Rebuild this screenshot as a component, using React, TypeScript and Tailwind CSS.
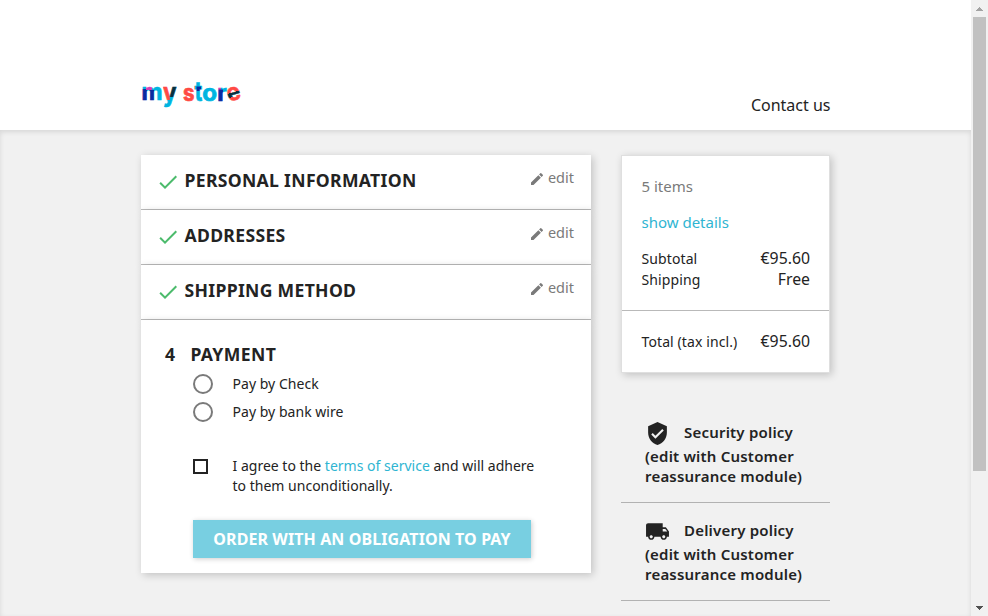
import React from "react";

const CARD_SHADOW = "shadow-[2px_2px_8px_0_rgba(0,0,0,0.2)]";

function Logo() {
  return (
    <svg
      width="100"
      height="32"
      viewBox="0 0 100 32"
      className="block overflow-visible"
      fontFamily='"Inter", "Noto Sans", sans-serif'
      fontWeight="700"
      fontSize="24"
      aria-label="my store"
    >
      <defs>
        <pattern id="patches" patternUnits="userSpaceOnUse" x="-2" y="-2" width="110" height="36" viewBox="-2 -2 110 36">
          <rect x="-2" y="-2" width="110" height="36" fill="#00b4e0" />
          <rect x="0" y="10" width="6" height="14" fill="#0a2ba0" />
          <rect x="5" y="4" width="6" height="7" fill="#d63fb5" />
          <rect x="8.5" y="11" width="4.5" height="14" fill="#0a2ba0" />
          <rect x="22" y="4" width="6.8" height="17" fill="#ff4a44" />
          <rect x="28.8" y="4" width="9" height="14" fill="#06303f" />
          <rect x="41" y="4" width="13" height="20" fill="#ff4a44" />
          <rect x="55.5" y="7.5" width="4.5" height="4.5" fill="#0a2ba0" />
          <rect x="76" y="4" width="4" height="7" fill="#d63fb5" />
          <rect x="77" y="10.5" width="5" height="14" fill="#0a2ba0" />
        </pattern>
        <linearGradient id="bar" gradientUnits="userSpaceOnUse" x1="0" y1="7.5" x2="0" y2="23.5">
          <stop offset="0.36" stopColor="#ff4a44" />
          <stop offset="0.36" stopColor="#06303f" />
          <stop offset="0.62" stopColor="#06303f" />
          <stop offset="0.62" stopColor="#ff4a44" />
        </linearGradient>
      </defs>
      <g fill="url(#patches)" stroke="url(#patches)" strokeWidth="0.7">
        <text x="0.5" y="21.2" textLength="21" lengthAdjust="spacingAndGlyphs">m</text>
        <text x="22" y="22.5" fontSize="26" textLength="13.5" lengthAdjust="spacingAndGlyphs">y</text>
        <text x="42" y="21.7" textLength="11.5" lengthAdjust="spacingAndGlyphs">s</text>
        <text x="53.7" y="21.7" fontSize="27" textLength="7.5" lengthAdjust="spacingAndGlyphs">t</text>
        <text x="61.3" y="21.7" textLength="14.8" lengthAdjust="spacingAndGlyphs">o</text>
        <text x="76.2" y="21.7" textLength="9.5" lengthAdjust="spacingAndGlyphs">r</text>
      </g>
      <g transform="rotate(-18 92.5 15)" fill="url(#bar)" stroke="url(#bar)" strokeWidth="0.5">
        <text x="86" y="21.2" textLength="13.5" lengthAdjust="spacingAndGlyphs">e</text>
      </g>
    </svg>
  );
}

function DoneStep({ title }: { title: string }) {
  return (
    <section className={`flex h-[55px] items-start border-b border-[#bababa] bg-white pl-[15px] pr-[17px] ${CARD_SHADOW}`}>
      <svg className="mt-[15px] size-6 shrink-0" viewBox="0 0 24 24" fill="#4cbb6c">
        <path d="M9 16.17 4.83 12l-1.42 1.41L9 19 21 7l-1.41-1.41z" />
      </svg>
      <h1 className="ml-[4.5px] mt-[12px] flex-1 text-[17.6px] font-bold leading-[27px] tracking-[0.31px]">{title}</h1>
      <span className="mt-[11px] flex items-center text-[14.5px] leading-[22px] text-[#7a7a7a]">
        <svg className="mr-[3px] mt-[4px] size-4" viewBox="0 0 24 24" fill="#7a7a7a">
          <path d="M3 17.25V21h3.75L17.81 9.94l-3.75-3.75L3 17.25zM20.71 7.04a.996.996 0 0 0 0-1.41l-2.34-2.34a.996.996 0 0 0-1.41 0l-1.83 1.83 3.75 3.75 1.83-1.83z" />
        </svg>
        edit
      </span>
    </section>
  );
}

function PaymentOption({ label }: { label: string }) {
  return (
    <label className="flex h-7 items-center">
      <span className="size-5 rounded-full border-2 border-[#7a7a7a]" />
      <span className="ml-[19.5px] text-sm tracking-[0.03px]">{label}</span>
    </label>
  );
}

function SummaryLine({ label, value }: { label: string; value: string }) {
  return (
    <div className="flex h-[21px] items-center justify-between">
      <span className="ml-[0.5px] text-sm tracking-[0.1px]">{label}</span>
      <span className="text-[15.8px]">{value}</span>
    </div>
  );
}

function Policy({ name, children }: { name: string; children: React.ReactNode }) {
  return (
    <li className="h-[98px] border-b border-[#b2b2b2] pl-6 pt-[15px] text-[15px] font-semibold leading-5 tracking-[0.2px]">
      <div className="flex h-[26px] items-start">
        <svg className="mt-px size-[25px]" viewBox="0 0 24 24" fill="#232323">
          {children}
        </svg>
        <span className="ml-[14px] mt-[2px]">{name}</span>
      </div>
      <div>
        (edit with Customer
        <br />
        reassurance module)
      </div>
    </li>
  );
}

function Scrollbar() {
  return (
    <div className="flex w-[17px] shrink-0 flex-col items-center bg-[#f1f1f1]">
      <div className="flex h-[17px] items-center">
        <svg width="7" height="4" viewBox="0 0 7 4" fill="#a3a3a3" shapeRendering="crispEdges">
          <path d="M3 0h1v1h1v1h1v1h1v1H0V3h1V2h1V1h1z" />
        </svg>
      </div>
      <div className="h-[454px] w-[13px] bg-[#c1c1c1]" />
      <div className="mt-auto flex h-[17px] items-center">
        <svg width="7" height="4" viewBox="0 0 7 4" fill="#505050" shapeRendering="crispEdges">
          <path d="M0 0h7v1H6v1H5v1H4v1H3V3H2V2H1V1H0z" />
        </svg>
      </div>
    </div>
  );
}

export default function App() {
  return (
    <div className="flex h-[616px] w-[988px] overflow-hidden bg-white font-['Noto_Sans',sans-serif] text-[#232323]">
      <div className="flex min-w-0 flex-1 flex-col">
        <header className="flex h-[130px] shrink-0 items-start justify-between pl-[141px] pr-[140.5px]">
          <div className="mt-[79px]">
            <Logo />
          </div>
          <a className="mt-[93px] text-base leading-6">Contact us</a>
        </header>

        <main className="flex flex-1 items-start bg-[#f1f1f1] pl-[141px] pt-[25px] shadow-[inset_0_2px_5px_0_rgba(0,0,0,0.11)]">
          <div className="w-[450px]">
            <DoneStep title="PERSONAL INFORMATION" />
            <DoneStep title="ADDRESSES" />
            <DoneStep title="SHIPPING METHOD" />
            <section className={`h-[253px] bg-white pl-[52px] pt-[21px] ${CARD_SHADOW}`}>
              <h1 className="-ml-7 flex text-[17.6px] font-bold leading-[27px] tracking-[0.4px]">
                <span className="w-[25.4px]">4</span>PAYMENT
              </h1>
              <div className="mt-[2px]">
                <PaymentOption label="Pay by Check" />
                <PaymentOption label="Pay by bank wire" />
              </div>
              <div className="mt-[30px] flex items-start">
                <span className="mt-[3px] size-[15px] shrink-0 border-2 border-[#232323]" />
                <p className="ml-[24.5px] text-sm leading-5 tracking-[0.01px]">
                  I agree to the <a className="text-[#2fb5d2]">terms of service</a> and will adhere
                  <br />
                  to them unconditionally.
                </p>
              </div>
              <button className="mt-6 h-[38px] w-[338px] bg-[#78cfe1] text-base font-bold tracking-[0.1px] text-white shadow-[1px_1px_5px_0_rgba(0,0,0,0.2)]">
                ORDER WITH AN OBLIGATION TO PAY
              </button>
            </section>
          </div>

          <aside className="ml-[30px] w-[209px]">
            <section className={`h-[218px] border border-[#dfdfdf] bg-white ${CARD_SHADOW}`}>
              <div className="h-[155px] border-b border-[#b9b9b9] px-[19px] pt-[19px]">
                <p className="ml-[0.5px] text-[15px] leading-[22px] text-[#7a7a7a]">5 items</p>
                <p className="mb-[15px] ml-[0.5px] mt-[14px] text-[15px] leading-[22px] text-[#2fb5d2]">show details</p>
                <SummaryLine label="Subtotal" value="€95.60" />
                <SummaryLine label="Shipping" value="Free" />
              </div>
              <div className="px-[19px] pt-5">
                <SummaryLine label="Total (tax incl.)" value="€95.60" />
              </div>
            </section>
            <ul className="mt-[32px]">
              <Policy name="Security policy">
                <path d="M12 1 3 5v6c0 5.55 3.84 10.74 9 12 5.16-1.26 9-6.45 9-12V5l-9-4zm-2 16-4-4 1.41-1.41L10 14.17l6.59-6.59L18 9l-8 8z" />
              </Policy>
              <Policy name="Delivery policy">
                <path d="M20 8h-3V4H3c-1.1 0-2 .9-2 2v11h2c0 1.66 1.34 3 3 3s3-1.34 3-3h6c0 1.66 1.34 3 3 3s3-1.34 3-3h2v-5l-3-4zM6 18.5c-.83 0-1.5-.67-1.5-1.5s.67-1.5 1.5-1.5 1.5.67 1.5 1.5-.67 1.5-1.5 1.5zm13.5-9 1.96 2.5H17V9.5h2.5zm-1.5 9c-.83 0-1.5-.67-1.5-1.5s.67-1.5 1.5-1.5 1.5.67 1.5 1.5-.67 1.5-1.5 1.5z" />
              </Policy>
            </ul>
          </aside>
        </main>
      </div>
      <Scrollbar />
    </div>
  );
}
